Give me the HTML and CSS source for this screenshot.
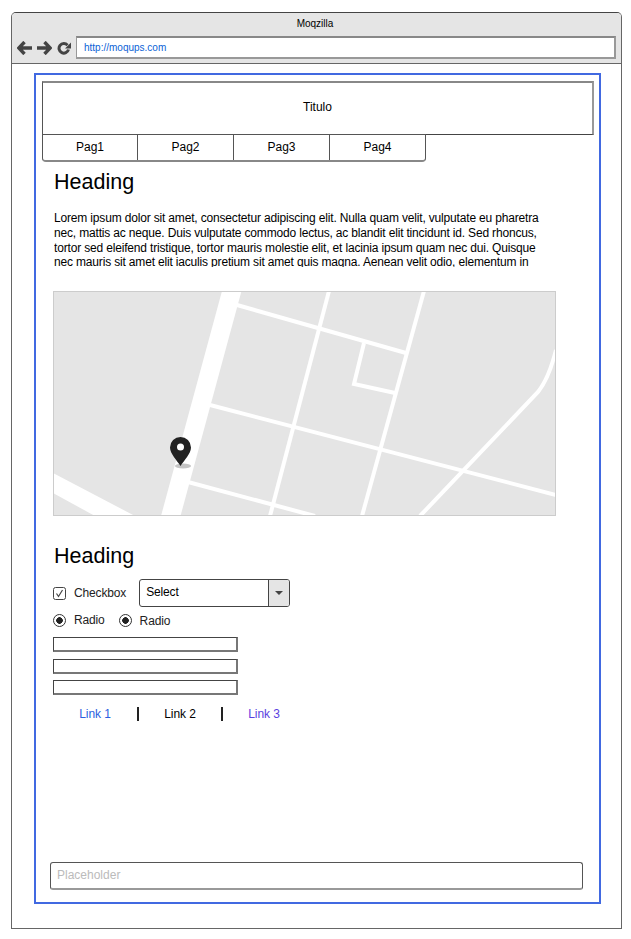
FILE: index.html
```html
<!DOCTYPE html>
<html lang="pt-BR">
<head>
  <meta charset="UTF-8">
  <title>Moqzilla</title>
  <link rel="stylesheet" href="styles.css">
</head>
<body>

  <div class="janela">
    <div class="barra">
      <div class="barra-titulo">Moqzilla</div>
      <div class="barra-nav">
        <svg class="nav-icone" width="15" height="14" viewBox="0 0 15 14">
          <path d="M7.500 1 1.800 7 7.500 13M2.500 7h12.500" fill="none" stroke="#444" stroke-width="3.400"/>
        </svg>
        <svg class="nav-icone" width="15" height="14" viewBox="0 0 15 14">
          <path d="M7.500 1l5.700 6-5.700 6M12.500 7H0" fill="none" stroke="#444" stroke-width="3.400"/>
        </svg>
        <svg class="nav-icone" width="14" height="14" viewBox="0 0 14 14">
          <path d="M10.500 4.200A4.800 4.800 0 1 0 11.500 8.500" fill="none" stroke="#444" stroke-width="3"/>
          <path d="M14 1.500v6H8z" fill="#444"/>
        </svg>
        <div class="endereco">http://moqups.com</div>
      </div>
    </div>

    <div class="quadro">
      <div class="titulo">Titulo</div>
      <div class="abas">
        <div class="aba">Pag1</div>
        <div class="aba">Pag2</div>
        <div class="aba">Pag3</div>
        <div class="aba">Pag4</div>
      </div>

      <h2 class="heading">Heading</h2>
      <p class="texto">Lorem ipsum dolor sit amet, consectetur adipiscing elit. Nulla quam velit, vulputate eu pharetra nec, mattis ac neque. Duis vulputate commodo lectus, ac blandit elit tincidunt id. Sed rhoncus, tortor sed eleifend tristique, tortor mauris molestie elit, et lacinia ipsum quam nec dui. Quisque nec mauris sit amet elit iaculis pretium sit amet quis magna. Aenean velit odio, elementum in</p>

      <svg class="mapa" width="503" height="225" viewBox="53 291 503 225">
        <rect x="53" y="291" width="503" height="225" fill="#e5e5e5"/>
        <g fill="none" stroke="#fff" stroke-width="4">
          <path d="M237 305 406 353"/>
          <path d="M329 291 270 516"/>
          <path d="M424 291 362 516"/>
          <path d="M364 343 354 384 395 393"/>
          <path d="M210 405 556 495"/>
          <path d="M188 482 315 516"/>
          <path d="M420 516 538 392Q549 378 556 350"/>
        </g>
        <path d="M222 291h19.500L180.500 516H161z" fill="#fff"/>
        <path d="M53 473l82 43H95L53 493z" fill="#fff"/>
        <ellipse cx="183" cy="466" rx="8" ry="2.500" fill="#c4c4c4"/>
        <path d="M180.500 437a10.500 10.500 0 0 0-10.500 10.500c0 6 7 13 10.500 18.500 3.500-5.500 10.500-12.500 10.500-18.500A10.500 10.500 0 0 0 180.500 437z" fill="#222"/>
        <circle cx="180.500" cy="447" r="3.500" fill="#fff"/>
        <rect x="53.500" y="291.500" width="502" height="224" fill="none" stroke="#ccc"/>
      </svg>

      <h2 class="heading heading-form">Heading</h2>

      <div class="linha linha-check">
        <svg class="check" width="13" height="13" viewBox="0 0 13 13">
          <rect x=".5" y=".5" width="12" height="12" rx="2" fill="#fff" stroke="#444"/>
          <path d="M3.500 6.500 5.500 9.500 9.500 3" fill="none" stroke="#444" stroke-width="1.200"/>
        </svg>
        <span class="rotulo">Checkbox</span>
        <div class="select">
          <span class="select-texto">Select</span>
          <span class="select-botao"><span class="seta"></span></span>
        </div>
      </div>

      <div class="linha linha-radio">
        <span class="radio"></span>
        <span class="rotulo rotulo-alto">Radio</span>
        <span class="radio radio-2"></span>
        <span class="rotulo">Radio</span>
      </div>

      <div class="campos">
        <div class="campo"></div>
        <div class="campo"></div>
        <div class="campo"></div>
      </div>

      <div class="links">
        <a class="link">Link 1</a>
        <a class="link link-atual">Link 2</a>
        <a class="link link-visitado">Link 3</a>
      </div>

      <div class="placeholder">Placeholder</div>
    </div>
  </div>

</body>
</html>
```

FILE: styles.css
```css
body {
  margin: 0;
  font-family: "Liberation Sans", Arial, sans-serif;
  background-color: #ffffff;
  color: #000;
}
.janela {
  box-sizing: border-box;
  width: 611px;
  height: 917px;
  margin: 12px 0 0 11px;
  border: 1px solid #666;
  border-top-color: #444;
  border-radius: 5px 5px 0 0;
}
.barra {
  box-sizing: border-box;
  height: 51px;
  background-color: #e5e5e5;
  border-bottom: 1px solid #666;
  border-radius: 4px 4px 0 0;
}
.barra-titulo {
  height: 18px;
  padding: 5px 3px 0 0;
  font-size: 10px;
  line-height: 12px;
  text-align: center;
}
.barra-nav {
  display: flex;
  align-items: center;
  gap: 5px;
  padding-left: 5px;
}
.endereco {
  box-sizing: border-box;
  width: 540px;
  height: 23px;
  padding-left: 7px;
  background-color: #fff;
  border: 2px solid #999;
  border-top-color: #888;
  border-left-width: 1px;
  color: #0b62d6;
  font-size: 10px;
  line-height: 19px;
}
.quadro {
  box-sizing: border-box;
  display: flex;
  flex-direction: column;
  align-items: flex-start;
  width: 567px;
  height: 831px;
  margin: 9px 0 0 22px;
  padding: 6px 6px 12px 6px;
  border: 2px solid #4169e1;
}
.titulo {
  box-sizing: border-box;
  width: 552px;
  height: 54px;
  border: 1px solid #555;
  border-top: 2px solid #888;
  border-right: 2px solid #999;
  border-bottom-color: #444;
  font-size: 12px;
  line-height: 49px;
  text-align: center;
}
.abas {
  display: flex;
  box-sizing: border-box;
  height: 28px;
  margin-top: -1px;
  border: 1px solid #555;
  border-bottom: 2px solid #888;
  border-radius: 0 0 4px 4px;
}
.aba {
  box-sizing: border-box;
  width: 96px;
  border-left: 1px solid #555;
  font-size: 12px;
  line-height: 25px;
  text-align: center;
}
.aba:first-child {
  width: 94px;
  border-left: none;
}
.heading {
  margin: 6px 0 0 12px;
  font-size: 21.500px;
  font-weight: normal;
  line-height: 28px;
}
.heading-form {
  margin-top: 26px;
}
.texto {
  width: 495px;
  height: 56px;
  margin: 15px 0 0 12px;
  overflow: hidden;
  font-size: 12px;
  letter-spacing: -0.170px;
  line-height: 14.800px;
}
.mapa {
  display: block;
  flex: none;
  margin: 24px 0 0 11px;
}
.linha {
  display: flex;
  align-items: center;
  margin-left: 11px;
  font-size: 12px;
  letter-spacing: -0.150px;
}
.linha-check {
  margin-top: 9px;
}
.check {
  flex: none;
}
.rotulo {
  margin-left: 8px;
  color: #222;
}
.rotulo-alto {
  position: relative;
  top: -1px;
}
.select {
  display: flex;
  box-sizing: border-box;
  width: 151px;
  height: 28px;
  margin-left: 13px;
  border: 1px solid #444;
  border-radius: 3px;
}
.select-texto {
  flex: 1;
  padding-left: 6px;
  line-height: 24px;
}
.select-botao {
  display: flex;
  align-items: center;
  justify-content: center;
  width: 20px;
  background-color: #e5e5e5;
  border-left: 1px solid #444;
  border-radius: 0 2px 2px 0;
}
.seta {
  border: 4px solid transparent;
  border-top: 4px solid #444;
  border-bottom: none;
}
.linha-radio {
  margin-top: 6px;
  height: 15px;
}
.radio {
  box-sizing: border-box;
  flex: none;
  width: 13px;
  height: 13px;
  background: radial-gradient(circle, #222 0, #222 3px, #fff 3.600px);
  border: 1px solid #333;
  border-radius: 50%;
}
.radio-2 {
  margin-left: 14px;
}
.campos {
  display: flex;
  flex-direction: column;
  gap: 6.500px;
  margin: 9px 0 0 11px;
}
.campo {
  box-sizing: border-box;
  width: 185px;
  height: 15px;
  border: 1px solid #444;
  border-right: 2px solid #777;
  border-bottom: 2px solid #777;
}
.links {
  display: flex;
  margin: 12px 0 0 11px;
  font-size: 12px;
  letter-spacing: -0.100px;
  line-height: 14px;
}
.link {
  box-sizing: border-box;
  width: 84px;
  text-align: center;
  color: #2b5fe0;
}
.link + .link {
  border-left: 2px solid #222;
}
.link-atual {
  color: #000;
}
.link-visitado {
  color: #5a3fe0;
}
.placeholder {
  box-sizing: border-box;
  width: 533px;
  height: 28px;
  margin: auto 0 0 8px;
  padding-left: 6px;
  border: 1px solid #555;
  border-bottom: 2px solid #999;
  border-radius: 3px;
  color: #bbb;
  font-size: 12px;
  line-height: 24px;
}
```
